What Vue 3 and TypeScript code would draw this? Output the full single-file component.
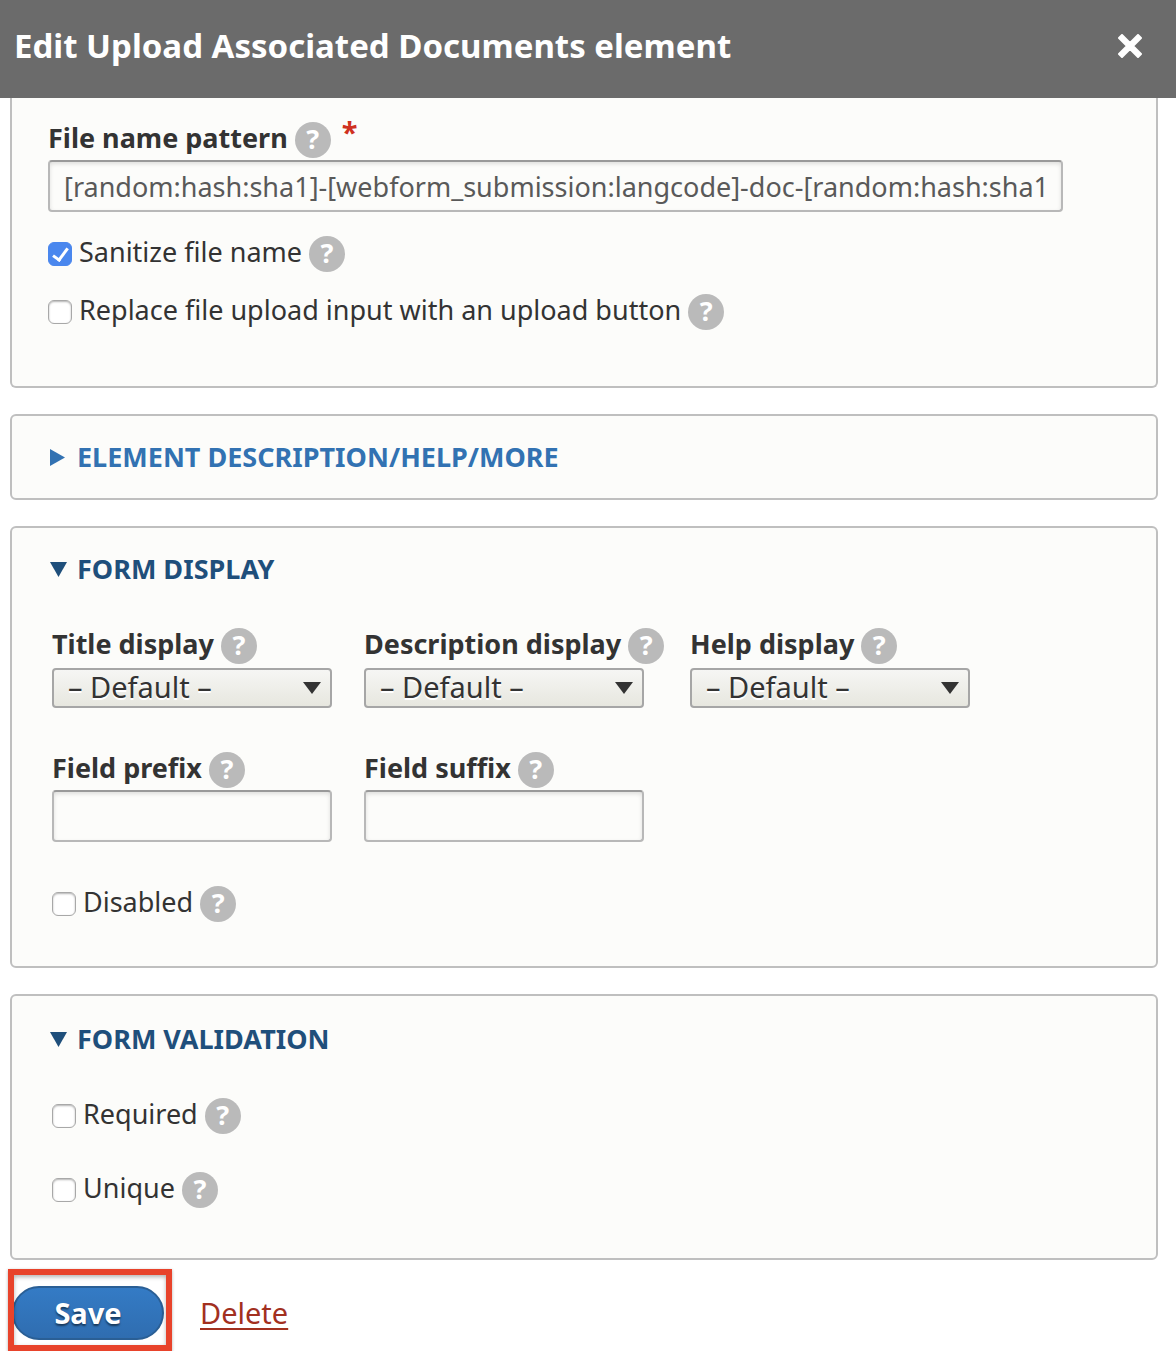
<script setup lang="ts">
import { ref } from 'vue'

interface Choice {
  id: string
  label: string
  value: string
}

const pattern = ref('[random:hash:sha1]-[webform_submission:langcode]-doc-[random:hash:sha1]')
const sanitize = ref(true)
const replaceInput = ref(false)
const disabled = ref(false)
const required = ref(false)
const unique = ref(false)
const helpOpen = ref(false)
const displayOpen = ref(true)
const validationOpen = ref(true)

const displays = ref<Choice[]>([
  { id: 'title-display', label: 'Title display', value: '' },
  { id: 'description-display', label: 'Description display', value: '' },
  { id: 'help-display', label: 'Help display', value: '' },
])

const affixes = ref<Choice[]>([
  { id: 'field-prefix', label: 'Field prefix', value: '' },
  { id: 'field-suffix', label: 'Field suffix', value: '' },
])
</script>

<template>
  <div class="dialog" role="dialog" aria-labelledby="dialog-title">
    <header class="titlebar">
      <h1 id="dialog-title">Edit Upload Associated Documents element</h1>
      <button class="close" type="button" aria-label="Close">
        <svg width="24" height="24" viewBox="0 0 24 24" aria-hidden="true">
          <path d="M4 1 12 9 20 1 23 4 15 12 23 20 20 23 12 15 4 23 1 20 9 12 1 4z" fill="#fff" stroke="#fff" stroke-width="2" stroke-linejoin="round" />
        </svg>
      </button>
    </header>

    <form class="content" @submit.prevent>
      <section class="panel panel-first">
        <div class="caption">
          <label for="pattern">File name pattern</label>
          <button class="help" type="button" aria-label="Help">?</button>
          <span class="mark">*</span>
        </div>
        <input id="pattern" v-model="pattern" class="text" type="text" />
        <div class="options">
          <div class="check">
            <input id="sanitize" v-model="sanitize" type="checkbox" />
            <label for="sanitize">Sanitize file name</label>
            <button class="help" type="button" aria-label="Help">?</button>
          </div>
          <div class="check">
            <input id="replace" v-model="replaceInput" type="checkbox" />
            <label for="replace">Replace file upload input with an upload button</label>
            <button class="help" type="button" aria-label="Help">?</button>
          </div>
        </div>
      </section>

      <details class="panel" :open="helpOpen">
        <summary>
          <svg class="arrow" width="18" height="18" viewBox="0 0 18 18" aria-hidden="true"><path d="M0 1 15 9.500 0 18z" fill="currentColor" /></svg>
          Element description/help/more
        </summary>
      </details>

      <details class="panel panel-display" :open="displayOpen">
        <summary>
          <svg class="arrow" width="18" height="18" viewBox="0 0 18 18" aria-hidden="true"><path d="M0 2H17L8.500 17z" fill="currentColor" /></svg>
          Form display
        </summary>
        <div class="body">
          <div class="columns">
            <div v-for="item in displays" :key="item.id">
              <div class="caption caption-select">
                <label :for="item.id">{{ item.label }}</label>
                <button class="help" type="button" aria-label="Help">?</button>
              </div>
              <div class="select">
                <select :id="item.id" v-model="item.value">
                  <option value="">– Default –</option>
                </select>
                <svg width="18" height="12" viewBox="0 0 18 12" aria-hidden="true"><path d="M0 0H18L9 12z" fill="#333" /></svg>
              </div>
            </div>
          </div>
          <div class="columns">
            <div v-for="item in affixes" :key="item.id">
              <div class="caption">
                <label :for="item.id">{{ item.label }}</label>
                <button class="help" type="button" aria-label="Help">?</button>
              </div>
              <input :id="item.id" v-model="item.value" class="text short" type="text" />
            </div>
          </div>
          <div class="check">
            <input id="disabled" v-model="disabled" type="checkbox" />
            <label for="disabled">Disabled</label>
            <button class="help" type="button" aria-label="Help">?</button>
          </div>
        </div>
      </details>

      <details class="panel panel-validation" :open="validationOpen">
        <summary>
          <svg class="arrow" width="18" height="18" viewBox="0 0 18 18" aria-hidden="true"><path d="M0 2H17L8.500 17z" fill="currentColor" /></svg>
          Form validation
        </summary>
        <div class="body">
          <div class="check">
            <input id="required" v-model="required" type="checkbox" />
            <label for="required">Required</label>
            <button class="help" type="button" aria-label="Help">?</button>
          </div>
          <div class="check">
            <input id="unique" v-model="unique" type="checkbox" />
            <label for="unique">Unique</label>
            <button class="help" type="button" aria-label="Help">?</button>
          </div>
        </div>
      </details>

      <div class="actions">
        <div class="highlight">
          <button class="save" type="submit">Save</button>
        </div>
        <a class="delete" href="#">Delete</a>
      </div>
    </form>
  </div>
</template>

<style>
body {
  margin: 0;
  background: #fff;
}
</style>

<style scoped>
.dialog,
.dialog * {
  box-sizing: border-box;
}

.dialog {
  color: #333;
  font: 27px/36px "Lucida Grande", "Noto Sans", sans-serif;
}

button,
input,
select {
  margin: 0;
  font-family: inherit;
}

.titlebar {
  display: flex;
  align-items: center;
  justify-content: space-between;
  padding: 24px 34px 30px 14px;
  background: #6b6b6b;
  color: #fff;
}

h1 {
  margin: 0;
  font-size: 33px;
  font-weight: 700;
  line-height: 44px;
}

.close {
  display: flex;
  padding: 0;
  border: 0;
  background: none;
}

.content {
  padding: 0 18px 0 10px;
}

.panel {
  margin-bottom: 26px;
  padding: 24px 40px 24px 36px;
  border: 2px solid #bfbfbf;
  border-radius: 6px;
  background: #fcfcfa;
}

.panel-first {
  padding-bottom: 56px;
  border-top: 0;
  border-radius: 0 0 6px 6px;
}

.panel-display {
  padding-bottom: 44px;
}

.panel-validation {
  margin-bottom: 9px;
  padding-top: 26px;
  padding-bottom: 50px;
}

summary {
  display: flex;
  align-items: center;
  gap: 9px;
  padding-left: 2px;
  color: #1f4f7b;
  font-weight: 700;
  line-height: 34px;
  text-transform: uppercase;
  list-style: none;
}

details:not([open]) summary {
  color: #3272b2;
}

.arrow {
  flex: none;
}

label {
  padding-bottom: 4px;
  line-height: 32px;
}

.caption,
.check {
  display: flex;
  align-items: center;
  gap: 7px;
}

.caption {
  margin-bottom: 2px;
  font-weight: 700;
}

.caption-select {
  margin-bottom: 4px;
}

.help {
  flex: none;
  width: 36px;
  height: 36px;
  padding: 0 0 2px;
  border: 0;
  border-radius: 50%;
  background: #bababa;
  color: #fff;
  font-size: 27px;
  font-weight: 700;
  line-height: 34px;
}

.mark {
  align-self: flex-start;
  margin-left: 4px;
  color: #cf3020;
  font-size: 29px;
  line-height: 20px;
}

.text {
  display: block;
  width: 95%;
  height: 52px;
  padding: 0 14px;
  border: 2px solid #b8b8b8;
  border-top-color: #999;
  border-radius: 4px;
  background: #fcfcfa;
  box-shadow: inset 0 2px 4px rgba(0, 0, 0, 0.12);
  color: #595959;
  font-size: 27px;
}

.short {
  width: 280px;
}

.options {
  display: grid;
  gap: 22px;
  margin-top: 24px;
}

.check input {
  flex: none;
  display: grid;
  place-items: center;
  width: 24px;
  height: 24px;
  appearance: none;
  border: 1px solid #a8a8a8;
  border-radius: 6px;
  background: #fff;
  box-shadow: inset 0 1px 2px rgba(0, 0, 0, 0.3);
}

.check input:checked {
  border-color: #4a87ee;
  background: #4a87ee;
  box-shadow: none;
}

.check input:checked::after {
  content: "";
  box-sizing: border-box;
  width: 9px;
  height: 16px;
  margin-bottom: 2px;
  border: solid #fff;
  border-width: 0 3px 3px 0;
  transform: rotate(36deg);
}

.body {
  display: grid;
  gap: 44px;
  margin-top: 42px;
  padding-left: 4px;
}

.panel-validation .body {
  gap: 38px;
}

.columns {
  display: grid;
  grid-template-columns: 312px 326px 280px;
}

.columns label {
  white-space: nowrap;
}

.select {
  position: relative;
  width: 280px;
}

.select svg {
  position: absolute;
  top: 14px;
  right: 11px;
  pointer-events: none;
}

select {
  display: block;
  width: 100%;
  height: 40px;
  padding: 0 40px 2px 14px;
  appearance: none;
  border: 2px solid #a6a6a6;
  border-radius: 4px;
  background: linear-gradient(#f6f6f4, #e7e7df);
  color: #333;
  font-size: 29px;
  line-height: 34px;
  text-shadow: 0 2px #fff;
}

.actions {
  display: flex;
  align-items: center;
  gap: 28px;
}

.highlight {
  position: relative;
  margin-left: -2px;
  padding: 17px 8px 11px 4px;
}

.highlight::after {
  content: "";
  position: absolute;
  inset: 0;
  border: 6px solid #e8432b;
  box-shadow: 0 1px 3px rgba(0, 0, 0, 0.3), inset 0 2px 4px rgba(0, 0, 0, 0.3);
  pointer-events: none;
}

.save {
  display: block;
  width: 152px;
  height: 54px;
  padding: 0;
  border: 2px solid #2a5f95;
  border-radius: 27px;
  background: linear-gradient(#347bc5, #2f6db0);
  color: #fff;
  font-size: 29px;
  font-weight: 700;
  line-height: 50px;
  text-shadow: 0 2px 2px rgba(0, 0, 0, 0.5);
}

.delete {
  padding-top: 6px;
  color: #a2301f;
  font-size: 29px;
  text-underline-offset: 4px;
  text-decoration-thickness: 2px;
}
</style>
